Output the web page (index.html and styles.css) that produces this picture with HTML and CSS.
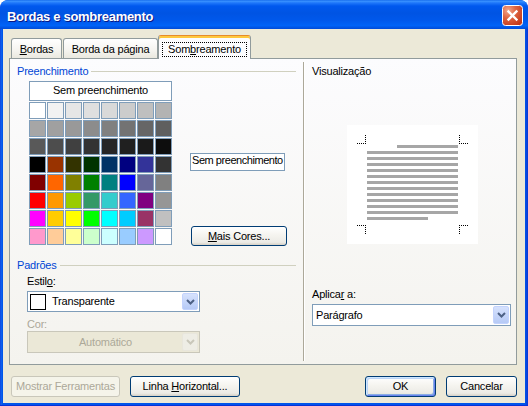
FILE: index.html
```html
<!DOCTYPE html>
<html lang="pt">
<head>
<meta charset="utf-8">
<title>Bordas e sombreamento</title>
<link rel="stylesheet" href="styles.css">
</head>
<body>
<div class="window">
  <div class="titlebar">
    <span class="title">Bordas e sombreamento</span>
    <svg class="close" width="21" height="21" viewBox="0 0 21 21">
      <defs>
        <radialGradient id="cg" cx="28%" cy="25%" r="85%">
          <stop offset="0" stop-color="#F3A88E"/>
          <stop offset="0.45" stop-color="#DE6542"/>
          <stop offset="1" stop-color="#C4391A"/>
        </radialGradient>
      </defs>
      <rect x="0.5" y="0.5" width="20" height="20" rx="3" fill="url(#cg)" stroke="#fff"/>
      <path d="M6.5 6.5 L14.5 14.5 M14.5 6.5 L6.5 14.5" stroke="#fff" stroke-width="2.4" stroke-linecap="square"/>
    </svg>
  </div>
  <div class="client">
    <div class="tabs">
      <div class="tab t1"><u>B</u>ordas</div>
      <div class="tab t2">Borda da página</div>
      <div class="tab t3"><span class="focus">Som<u>b</u>reamento</span></div>
    </div>
    <div class="panel">
      <div class="left">
        <div class="group">Preenchimento</div>
        <div class="fill">
          <div class="palette">
            <div class="nofill">Sem preenchimento</div>
            <div class="grid">
              <span style="background:#FFFFFF"></span><span style="background:#F2F2F2"></span><span style="background:#E6E6E6"></span><span style="background:#DFDFDF"></span><span style="background:#D9D9D9"></span><span style="background:#CCCCCC"></span><span style="background:#BFBFBF"></span><span style="background:#B3B3B3"></span>
              <span style="background:#A6A6A6"></span><span style="background:#A0A0A0"></span><span style="background:#999999"></span><span style="background:#8C8C8C"></span><span style="background:#808080"></span><span style="background:#737373"></span><span style="background:#666666"></span><span style="background:#5F5F5F"></span>
              <span style="background:#595959"></span><span style="background:#4D4D4D"></span><span style="background:#404040"></span><span style="background:#333333"></span><span style="background:#262626"></span><span style="background:#202020"></span><span style="background:#1A1A1A"></span><span style="background:#0D0D0D"></span>
              <span style="background:#000000"></span><span style="background:#993300"></span><span style="background:#333300"></span><span style="background:#003300"></span><span style="background:#003366"></span><span style="background:#000080"></span><span style="background:#333399"></span><span style="background:#333333"></span>
              <span style="background:#800000"></span><span style="background:#FF6600"></span><span style="background:#808000"></span><span style="background:#008000"></span><span style="background:#008080"></span><span style="background:#0000FF"></span><span style="background:#666699"></span><span style="background:#808080"></span>
              <span style="background:#FF0000"></span><span style="background:#FF9900"></span><span style="background:#99CC00"></span><span style="background:#339966"></span><span style="background:#33CCCC"></span><span style="background:#3366FF"></span><span style="background:#800080"></span><span style="background:#969696"></span>
              <span style="background:#FF00FF"></span><span style="background:#FFCC00"></span><span style="background:#FFFF00"></span><span style="background:#00FF00"></span><span style="background:#00FFFF"></span><span style="background:#00CCFF"></span><span style="background:#993366"></span><span style="background:#C0C0C0"></span>
              <span style="background:#FF99CC"></span><span style="background:#FFCC99"></span><span style="background:#FFFF99"></span><span style="background:#CCFFCC"></span><span style="background:#CCFFFF"></span><span style="background:#99CCFF"></span><span style="background:#CC99FF"></span><span style="background:#FFFFFF"></span>
            </div>
          </div>
          <div class="side">
            <div class="current">Sem preenchimento</div>
            <div class="btn more"><span><u>M</u>ais Cores...</span></div>
          </div>
        </div>
        <div class="group g2">Padrões</div>
        <div class="lbl lbl-estilo">Estil<u>o</u>:</div>
        <div class="combo c1">
          <span class="swatch"></span>
          <span class="txt">Transparente</span>
          <span class="dd"><svg width="9" height="6" viewBox="0 0 9 6"><path d="M1 1 L4.5 4.5 L8 1" fill="none" stroke="#4D6185" stroke-width="2"/></svg></span>
        </div>
        <div class="lbl cor">Cor:</div>
        <div class="combo c2">
          <span class="txt center">Automático</span>
          <span class="dd"><svg width="9" height="6" viewBox="0 0 9 6"><path d="M1 1 L4.5 4.5 L8 1" fill="none" stroke="#C9C7BA" stroke-width="2"/></svg></span>
        </div>
      </div>
      <div class="sep"></div>
      <div class="right">
        <div class="rlbl">Visualização</div>
        <div class="preview">
          <svg width="131" height="119" viewBox="0 0 131 119" shape-rendering="crispEdges">
            <g fill="#A6A6A6">
              <rect x="50" y="20" width="61" height="3"/>
              <rect x="20" y="26" width="91" height="3"/>
              <rect x="20" y="32" width="91" height="3"/>
              <rect x="20" y="38" width="91" height="3"/>
              <rect x="20" y="44" width="91" height="3"/>
              <rect x="20" y="50" width="91" height="3"/>
              <rect x="20" y="56" width="91" height="3"/>
              <rect x="20" y="62" width="91" height="3"/>
              <rect x="20" y="68" width="91" height="3"/>
              <rect x="20" y="74" width="91" height="3"/>
              <rect x="20" y="80" width="91" height="3"/>
              <rect x="20" y="86" width="91" height="3"/>
              <rect x="20" y="92" width="61" height="3"/>
            </g>
            <g stroke="#000" stroke-width="1" stroke-dasharray="1 1" fill="none">
              <path d="M10 18.5H19M18.5 10V19"/>
              <path d="M112 18.5H121M112.5 10V19"/>
              <path d="M10 100.5H19M18.5 100V109"/>
              <path d="M112 100.5H121M112.5 100V109"/>
            </g>
          </svg>
        </div>
        <div class="rlbl apl">Aplica<u>r</u> a:</div>
        <div class="combo c3">
          <span class="txt">Parágrafo</span>
          <span class="dd"><svg width="9" height="6" viewBox="0 0 9 6"><path d="M1 1 L4.5 4.5 L8 1" fill="none" stroke="#4D6185" stroke-width="2"/></svg></span>
        </div>
      </div>
    </div>
    <div class="buttons">
      <div class="btn disabled b-mostrar">Mostrar Ferramentas</div>
      <div class="btn b-linha"><span>Linha <u>H</u>orizontal...</span></div>
      <div class="btn default b-ok">OK</div>
      <div class="btn b-cancel">Cancelar</div>
    </div>
  </div>
</div>
</body>
</html>
```
FILE: styles.css
```css
* { box-sizing: border-box; }
html, body { margin: 0; padding: 0; }
body {
  width: 528px;
  height: 406px;
  overflow: hidden;
  background: #ffffff;
  font: 11px/13px "Liberation Sans", Arial, sans-serif;
  letter-spacing: -0.2px;
  color: #000;
}
u { text-decoration: underline; text-underline-offset: 1px; }

.window {
  width: 528px;
  height: 406px;
  display: flex;
  flex-direction: column;
  background: linear-gradient(90deg, #0831D9 0, #166AEE 1px, #0055EA 2px, #0055EA 525px, #0843D9 527px, #0831D9 528px);
  border-radius: 8px 8px 0 0;
  overflow: hidden;
  box-shadow: inset 0 -1px #0831D9;
}

.titlebar {
  height: 29px;
  flex: none;
  display: flex;
  align-items: flex-start;
  background: linear-gradient(180deg, #0A5FE8 0, #3D95FF 1px, #1E76FA 3px, #0058EE 6px, #0054E3 45%, #0058EB 70%, #0063F7 88%, #004BD8 100%);
  border-radius: 7px 7px 0 0;
}
.title {
  margin: 10px 0 0 7px;
  font: bold 13px/13px "Liberation Sans", Arial, sans-serif;
  letter-spacing: -0.3px;
  color: #fff;
  text-shadow: 1px 1px #0A1883;
}
.close {
  display: block;
  margin: 5px 5px 0 auto;
}

.client {
  flex: 1;
  margin: 0 3px 3px;
  background: #ECE9D8;
  display: flex;
  flex-direction: column;
}

.tabs {
  display: flex;
  align-items: flex-end;
  height: 23px;
  margin: 6px 0 0 8px;
}
.tab {
  height: 20px;
  border: 1px solid #919B9C;
  border-bottom: 0;
  border-radius: 3px 3px 0 0;
  background: linear-gradient(#FFFFFF, #F6F5F1 55%, #EAE8DF);
  padding-top: 4px;
  text-align: center;
  white-space: nowrap;
}
.t1 { width: 51px; margin-right: 1px; }
.t2 { width: 95px; }
.t3 {
  width: 93px;
  height: 24px;
  margin-bottom: -1px;
  position: relative;
  z-index: 1;
  background: #FCFCFE;
  border-top-color: #E68B2C;
  box-shadow: inset 0 2px #FFC83C;
  padding-top: 6px;
}
.focus {
  display: inline-block;
  border: 1px dotted #000;
  padding: 0 5px;
  line-height: 13px;
}

.panel {
  margin-left: 6px;
  width: 508px;
  height: 307px;
  flex: none;
  border: 1px solid #919B9C;
  background: linear-gradient(#FCFCFE, #F4F3EE);
  display: flex;
}

.left {
  width: 293px;
  flex: none;
  padding-top: 6px;
}
.group {
  display: flex;
  align-items: center;
  gap: 3px;
  margin-left: 7px;
  width: 279px;
  color: #0046D5;
}
.group::after {
  content: "";
  flex: 1;
  height: 1px;
  background: #D0D0BF;
}
.g2 { margin-top: 13px; }

.fill {
  display: flex;
  gap: 18px;
  margin: 3px 0 0 19px;
}
.palette { width: 143px; }
.nofill {
  height: 20px;
  border: 1px solid #7F9DB9;
  background: #fff;
  text-align: center;
  line-height: 17px;
}
.grid {
  margin-top: 1px;
  display: grid;
  grid-template-columns: repeat(8, 17px);
  grid-auto-rows: 17px;
  gap: 1px;
}
.grid span { border: 1px solid #7F9DB9; }

.side {
  display: flex;
  flex-direction: column;
  align-items: flex-start;
  padding-top: 72px;
}
.current {
  width: 95px;
  height: 18px;
  border: 1px solid #7F9DB9;
  background: #fff;
  line-height: 13px;
  padding-left: 1px;
  letter-spacing: -0.45px;
  white-space: nowrap;
}

.btn {
  height: 21px;
  border: 1px solid #003C74;
  border-radius: 3px;
  background: linear-gradient(#FFFFFF, #F5F4EF 45%, #ECEBE6 85%, #D6D0C5);
  display: flex;
  align-items: center;
  justify-content: center;
  white-space: nowrap;
}
.more {
  width: 96px;
  height: 20px;
  margin: 55px 0 0 1px;
}

.lbl { margin-left: 17px; }
.lbl-estilo { margin-top: 3px; }
.cor { color: #ACA899; margin-top: 6px; }

.combo {
  display: flex;
  align-items: center;
  border: 1px solid #7F9DB9;
  background: #fff;
  padding: 1px;
}
.combo .txt { flex: 1; white-space: nowrap; }
.combo .center { text-align: center; color: #ACA899; }
.dd {
  width: 16px;
  align-self: stretch;
  display: flex;
  align-items: center;
  justify-content: center;
  border: 1px solid #C3D3FD;
  border-radius: 2px;
  background: linear-gradient(#D6E2FD, #B6CAF6);
}
.dd svg { display: block; }
.c1 { margin: 3px 0 0 17px; width: 173px; height: 21px; }
.swatch {
  width: 16px;
  height: 16px;
  border: 1px solid #000;
  background: #fff;
  margin: 0 6px 0 1px;
}
.c2 {
  margin-left: 17px;
  width: 173px;
  height: 22px;
  border-color: #C9C7BA;
  background: #EBE8D7;
}
.c2 .dd {
  border-color: #E8E6DC;
  background: #EEEDE5;
}

.sep {
  width: 2px;
  flex: none;
  margin: 3px 0;
  border-left: 1px solid #ACA899;
  border-right: 1px solid #fff;
}

.right {
  flex: 1;
  padding: 6px 0 0 7px;
}
.preview {
  margin: 47px 0 0 35px;
  width: 131px;
  height: 119px;
  background: #fff;
}
.preview svg { display: block; }
.apl { margin-top: 44px; }
.c3 { margin-top: 3px; width: 199px; height: 22px; }
.c3 .txt { padding-left: 2px; }

.buttons {
  display: flex;
  gap: 10px;
  margin-top: 11px;
  padding: 0 8px;
}
.b-mostrar { width: 109px; }
.b-linha { width: 110px; }
.b-ok { width: 71px; margin-left: auto; }
.b-cancel { width: 71px; }
.disabled {
  border-color: #C9C7BA;
  background: #F5F4EA;
  color: #ACA899;
}
.default {
  box-shadow: inset 1px 1px 0 #CEE7FF, inset -1px -1px 0 #6982EE, inset 2px 2px 0 #BCD4F6, inset -2px -2px 0 #89ADE4;
}
```
